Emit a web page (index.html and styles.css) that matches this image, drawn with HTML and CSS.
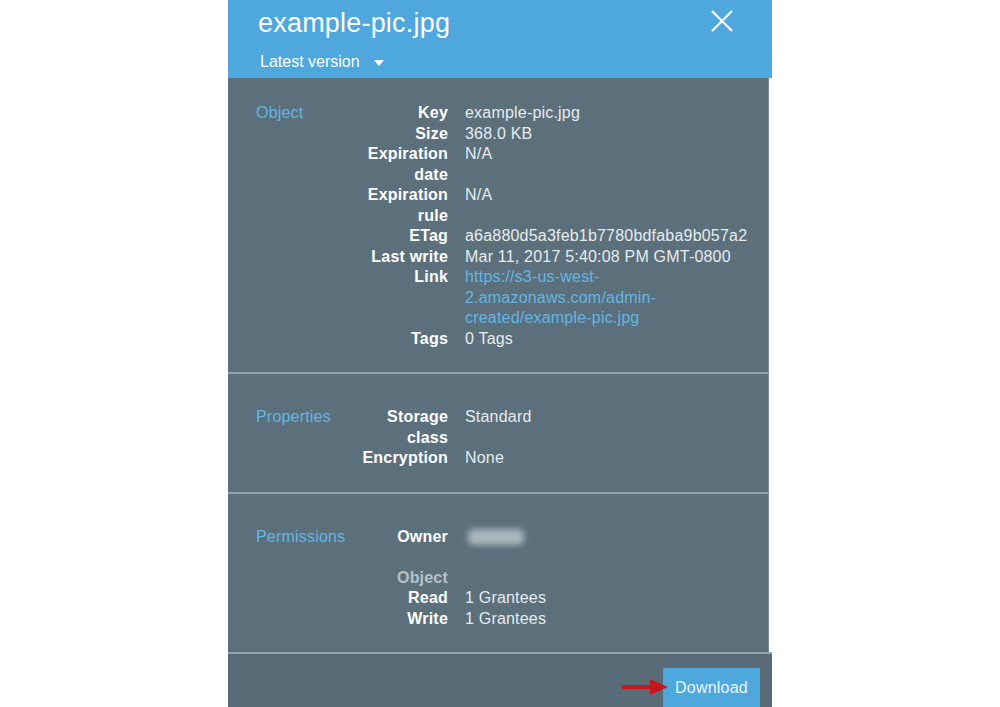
FILE: index.html
```html
<!DOCTYPE html>
<html lang="en">
<head>
  <meta charset="UTF-8">
  <title>example-pic.jpg</title>
  <link rel="stylesheet" href="styles.css">
</head>
<body>
  <div class="panel">

    <!-- Header with file name and version picker -->
    <div class="panel-header">
      <div class="title-row">
        <h1 class="file-name">example-pic.jpg</h1>
        <button class="close-btn" aria-label="Close">
          <svg width="24" height="24" viewBox="0 0 24 24">
            <path d="M2 2 L22 22 M22 2 L2 22" stroke="#fff" stroke-width="2.2" fill="none"/>
          </svg>
        </button>
      </div>
      <div class="version">Latest version <span class="caret"></span></div>
    </div>

    <!-- Object details -->
    <div class="section section-first">
      <div class="section-name">Object</div>
      <dl class="props">
        <dt>Key</dt><dd>example-pic.jpg</dd>
        <dt>Size</dt><dd>368.0 KB</dd>
        <dt>Expiration date</dt><dd>N/A</dd>
        <dt>Expiration rule</dt><dd>N/A</dd>
        <dt>ETag</dt><dd>a6a880d5a3feb1b7780bdfaba9b057a2</dd>
        <dt>Last write</dt><dd>Mar 11, 2017 5:40:08 PM GMT-0800</dd>
        <dt>Link</dt><dd><a href="#">https://s3-us-west-<br>2.amazonaws.com/admin-<br>created/example-pic.jpg</a></dd>
        <dt>Tags</dt><dd>0 Tags</dd>
      </dl>
    </div>

    <div class="section">
      <div class="section-name">Properties</div>
      <dl class="props">
        <dt>Storage class</dt><dd>Standard</dd>
        <dt>Encryption</dt><dd>None</dd>
      </dl>
    </div>

    <div class="section">
      <div class="section-name">Permissions</div>
      <dl class="props">
        <dt>Owner</dt><dd><span class="blurred"></span></dd>
        <dt class="spacer">&nbsp;</dt><dd></dd>
        <dt class="muted">Object</dt><dd></dd>
        <dt>Read</dt><dd>1 Grantees</dd>
        <dt>Write</dt><dd>1 Grantees</dd>
      </dl>
    </div>

    <!-- Footer actions -->
    <div class="panel-footer">
      <span class="arrow">
        <svg width="46" height="16" viewBox="0 0 46 16">
          <path d="M0 8 H30" stroke="#c4161c" stroke-width="4"/>
          <path d="M28 0 L46 8 L28 16 Z" fill="#c4161c"/>
        </svg>
      </span>
      <button class="download-btn">Download</button>
    </div>

  </div>
</body>
</html>
```

FILE: styles.css
```css
/* Colours */
:root {
  --header-bg: #4ea7dd;
  --body-bg: #5c707c;
  --footer-bg: #586b77;
  --divider: #93a3ac;
  --accent: #62b6e4;
  --label: #ffffff;
  --value: #e6ebee;
}

body {
  margin: 0;
  background: #fff;
  font-family: 'Liberation Sans', Arial, sans-serif;
  font-size: 16px;
  letter-spacing: 0.2px;
}

.panel {
  width: 544px;
  margin-left: 228px;
  height: 707px;
  overflow: hidden;
  display: flex;
  flex-direction: column;
}

.panel > * {
  flex-shrink: 0;
}

/* Header */
.panel-header {
  background: var(--header-bg);
  height: 78px;
  box-sizing: border-box;
  padding: 7px 38px 0 30px;
  color: #fff;
}

.title-row {
  display: flex;
  justify-content: space-between;
  align-items: flex-start;
}

.file-name {
  margin: 0;
  font-size: 27px;
  font-weight: normal;
  line-height: 32px;
  letter-spacing: 0.2px;
}

.close-btn {
  background: none;
  border: none;
  padding: 0;
  margin-top: 2px;
  width: 24px;
  height: 24px;
  cursor: pointer;
}

.version {
  margin-top: 13px;
  margin-left: 2px;
  font-size: 16px;
  line-height: 20px;
  letter-spacing: 0;
}

.caret {
  display: inline-block;
  margin-left: 10px;
  vertical-align: middle;
  border-left: 5px solid transparent;
  border-right: 5px solid transparent;
  border-top: 6px solid #fff;
}

/* Sections */
.section {
  width: 541px;
  box-sizing: border-box;
  background: var(--body-bg);
  border-right: 1px solid #7d8f99;
  border-top: 2px solid var(--divider);
  padding: 33px 0 23px 28px;
  display: flex;
}

.section-first {
  border-top: none;
  padding-top: 25px;
}

.section-name {
  width: 102px;
  color: var(--accent);
  line-height: 20.5px;
}

.props {
  margin: 0;
  display: grid;
  grid-template-columns: 90px 290px;
  column-gap: 17px;
  line-height: 20.5px;
}

.props dt {
  margin: 0;
  text-align: right;
  font-weight: bold;
  color: var(--label);
}

.props dt.muted {
  color: #b6c1c7;
}

.props dd {
  margin: 0;
  color: var(--value);
}

.props a {
  color: var(--accent);
  text-decoration: none;
}

.blurred {
  display: inline-block;
  margin-left: 3px;
  width: 56px;
  height: 16px;
  vertical-align: middle;
  background: #aab7be;
  border-radius: 6px;
  filter: blur(3px);
}

/* Footer */
.panel-footer {
  flex: 1;
  background: var(--footer-bg);
  border-top: 2px solid var(--divider);
  display: flex;
  justify-content: flex-end;
  align-items: flex-start;
  padding: 14px 12px 0 0;
  position: relative;
}

.download-btn {
  background: var(--header-bg);
  color: #eaf6fd;
  border: none;
  font-family: inherit;
  font-size: 16px;
  letter-spacing: 0.2px;
  width: 97px;
  height: 42px;
  padding-bottom: 4px;
  cursor: pointer;
}

.arrow {
  position: absolute;
  left: 394px;
  top: 25px;
}
```
